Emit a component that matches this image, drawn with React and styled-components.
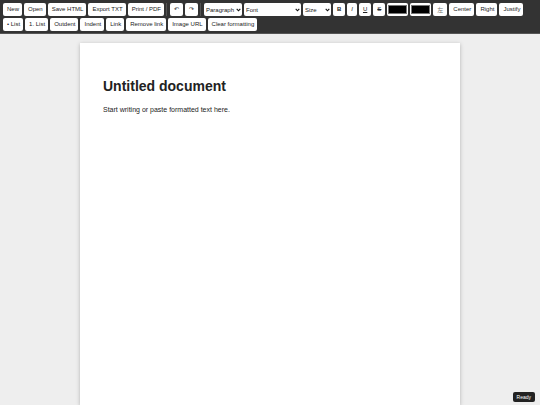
import React from "react";
import styled, { createGlobalStyle } from "styled-components";

const GlobalStyle = createGlobalStyle`
  * { box-sizing: border-box; }
  body {
    margin: 0;
    background: #eeeeee;
    color: #222222;
    font-family: "Liberation Sans", Arial, sans-serif;
  }
`;

const Toolbar = styled.header`
  position: sticky;
  top: 0;
  display: flex;
  flex-wrap: wrap;
  gap: 2px;
  padding: 3px 3px 2px;
  background: #333333;
  border-bottom: 1px solid #555555;
`;

const ToolButton = styled.button`
  height: 13px;
  padding: 0 3px 0 4px;
  border: 0;
  border-radius: 2px;
  background: #ffffff;
  color: #222222;
  font: 6px "Liberation Sans", Arial, sans-serif;
  line-height: 13px;
  white-space: nowrap;
`;

const IconButton = styled(ToolButton)`
  padding: 0 4px;
`;

const GlyphButton = styled(IconButton)`
  color: #777777;
  font-family: "Noto Sans CJK SC", sans-serif;
  line-height: 12px;
`;

const Divider = styled.span`
  width: 1px;
  height: 13px;
  margin-right: 1px;
  background: #555555;
`;

const SelectBox = styled.span`
  position: relative;
  display: flex;
  width: ${(p) => p.$width}px;
`;

const Select = styled.select`
  appearance: none;
  width: 100%;
  height: 13px;
  padding: 0 2px;
  border: 0;
  border-radius: 2px;
  background: #ffffff;
  color: #222222;
  font: 6px "Liberation Sans", Arial, sans-serif;
`;

const Chevron = styled.svg`
  position: absolute;
  right: 1px;
  top: 5px;
  width: 5px;
  height: 4px;
  pointer-events: none;
`;

const ColorInput = styled.input`
  appearance: none;
  width: 21px;
  height: 13px;
  padding: 2px 1px;
  border: 0;
  border-radius: 2px;
  background: #ffffff;
  &::-webkit-color-swatch-wrapper { padding: 0; }
  &::-webkit-color-swatch { border: 1px solid #777777; border-radius: 0; }
`;

const Page = styled.main`
  max-width: 380px;
  min-height: calc(100vh - 43px);
  margin: 9px auto 0;
  padding: 33px 23px;
  background: #ffffff;
  box-shadow: 0 1px 4px rgba(0, 0, 0, 0.25);
  outline: none;
`;

const Title = styled.h1`
  margin: 0 0 9px;
  font-size: 14px;
  line-height: 20px;
`;

const Paragraph = styled.p`
  margin: 0;
  font-size: 7px;
  line-height: 10px;
`;

const Status = styled.div`
  position: fixed;
  right: 5px;
  bottom: 3px;
  padding: 0 4px;
  border-radius: 2px;
  background: #222222;
  color: #ffffff;
  font-size: 5px;
  line-height: 10px;
`;

const fileActions = ["New", "Open", "Save HTML", "Export TXT", "Print / PDF"];
const formatActions = [
  "Center", "Right", "Justify", "• List", "1. List", "Outdent", "Indent",
  "Link", "Remove link", "Image URL", "Clear formatting",
];

function Picker({ label, width }) {
  return (
    <SelectBox $width={width}>
      <Select aria-label={label}>
        <option>{label}</option>
      </Select>
      <Chevron viewBox="0 0 5 4" aria-hidden="true">
        <path d="M.7 .8 2.5 2.8 4.3 .8" fill="none" stroke="#111" strokeWidth="1.1" />
      </Chevron>
    </SelectBox>
  );
}

export default function App() {
  return (
    <>
      <GlobalStyle />
      <Toolbar role="toolbar" aria-label="Document tools">
        {fileActions.map((t) => (
          <ToolButton key={t}>{t}</ToolButton>
        ))}
        <Divider />
        <IconButton aria-label="Undo">↶</IconButton>
        <IconButton aria-label="Redo">↷</IconButton>
        <Divider />
        <Picker label="Paragraph" width={38} />
        <Picker label="Font" width={57} />
        <Picker label="Size" width={28} />
        <IconButton aria-label="Bold"><b>B</b></IconButton>
        <IconButton aria-label="Italic"><i>I</i></IconButton>
        <IconButton aria-label="Underline"><u>U</u></IconButton>
        <IconButton aria-label="Strikethrough"><s>S</s></IconButton>
        <ColorInput type="color" defaultValue="#000000" aria-label="Text color" />
        <ColorInput type="color" defaultValue="#000000" aria-label="Highlight color" />
        <GlyphButton aria-label="Align left">左</GlyphButton>
        {formatActions.map((t) => (
          <ToolButton key={t}>{t}</ToolButton>
        ))}
      </Toolbar>
      <Page contentEditable suppressContentEditableWarning>
        <Title>Untitled document</Title>
        <Paragraph>Start writing or paste formatted text here.</Paragraph>
      </Page>
      <Status role="status">Ready</Status>
    </>
  );
}
